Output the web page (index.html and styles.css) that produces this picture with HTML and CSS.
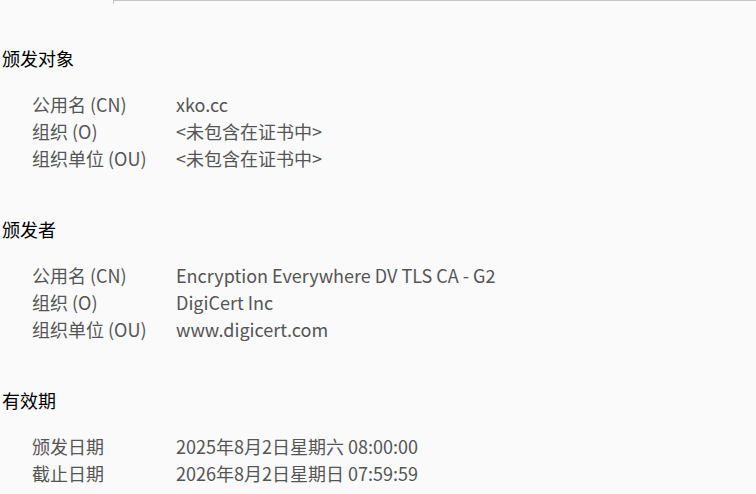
FILE: index.html
```html
<!DOCTYPE html>
<html>
<head>
    <meta charset="utf-8">
    <title>证书查看器</title>
    <link rel="stylesheet" href="styles.css">
</head>
<body>
    <div class="tab-edge"></div>

    <div class="section">
        <h2 class="section-title">颁发对象</h2>
        <div class="fields">
            <div class="label">公用名 (CN)</div>
            <div class="value">xko.cc</div>
            <div class="label">组织 (O)</div>
            <div class="value">&lt;未包含在证书中&gt;</div>
            <div class="label">组织单位 (OU)</div>
            <div class="value">&lt;未包含在证书中&gt;</div>
        </div>
    </div>

    <div class="section">
        <h2 class="section-title">颁发者</h2>
        <div class="fields">
            <div class="label">公用名 (CN)</div>
            <div class="value">Encryption Everywhere DV TLS CA - G2</div>
            <div class="label">组织 (O)</div>
            <div class="value">DigiCert Inc</div>
            <div class="label">组织单位 (OU)</div>
            <div class="value">www.digicert.com</div>
        </div>
    </div>

    <div class="section">
        <h2 class="section-title">有效期</h2>
        <div class="fields">
            <div class="label">颁发日期</div>
            <div class="value">2025年8月2日星期六 08:00:00</div>
            <div class="label">截止日期</div>
            <div class="value">2026年8月2日星期日 07:59:59</div>
        </div>
    </div>
</body>
</html>
```

FILE: styles.css
```css
body {
  font-family: "Noto Sans CJK SC", sans-serif;
  font-size: 18px;
  margin: 0;
  padding: 0 0 0 2px;
  background-color: #fafafa;
  color: #555;
}

.tab-edge {
  margin-left: 111px;
  height: 3px;
  border-top: 1px solid #c4c4c4;
  border-left: 1px solid #c4c4c4;
}

.section {
  margin-top: 42px;
}

.section + .section {
  margin-top: 45px;
}

.section-title {
  margin: 0;
  font-size: 18px;
  font-weight: normal;
  line-height: 24px;
  color: #000;
}

.fields {
  display: grid;
  grid-template-columns: 144px auto;
  margin-top: 21px;
  padding-left: 30px;
  line-height: 27px;
}
```
